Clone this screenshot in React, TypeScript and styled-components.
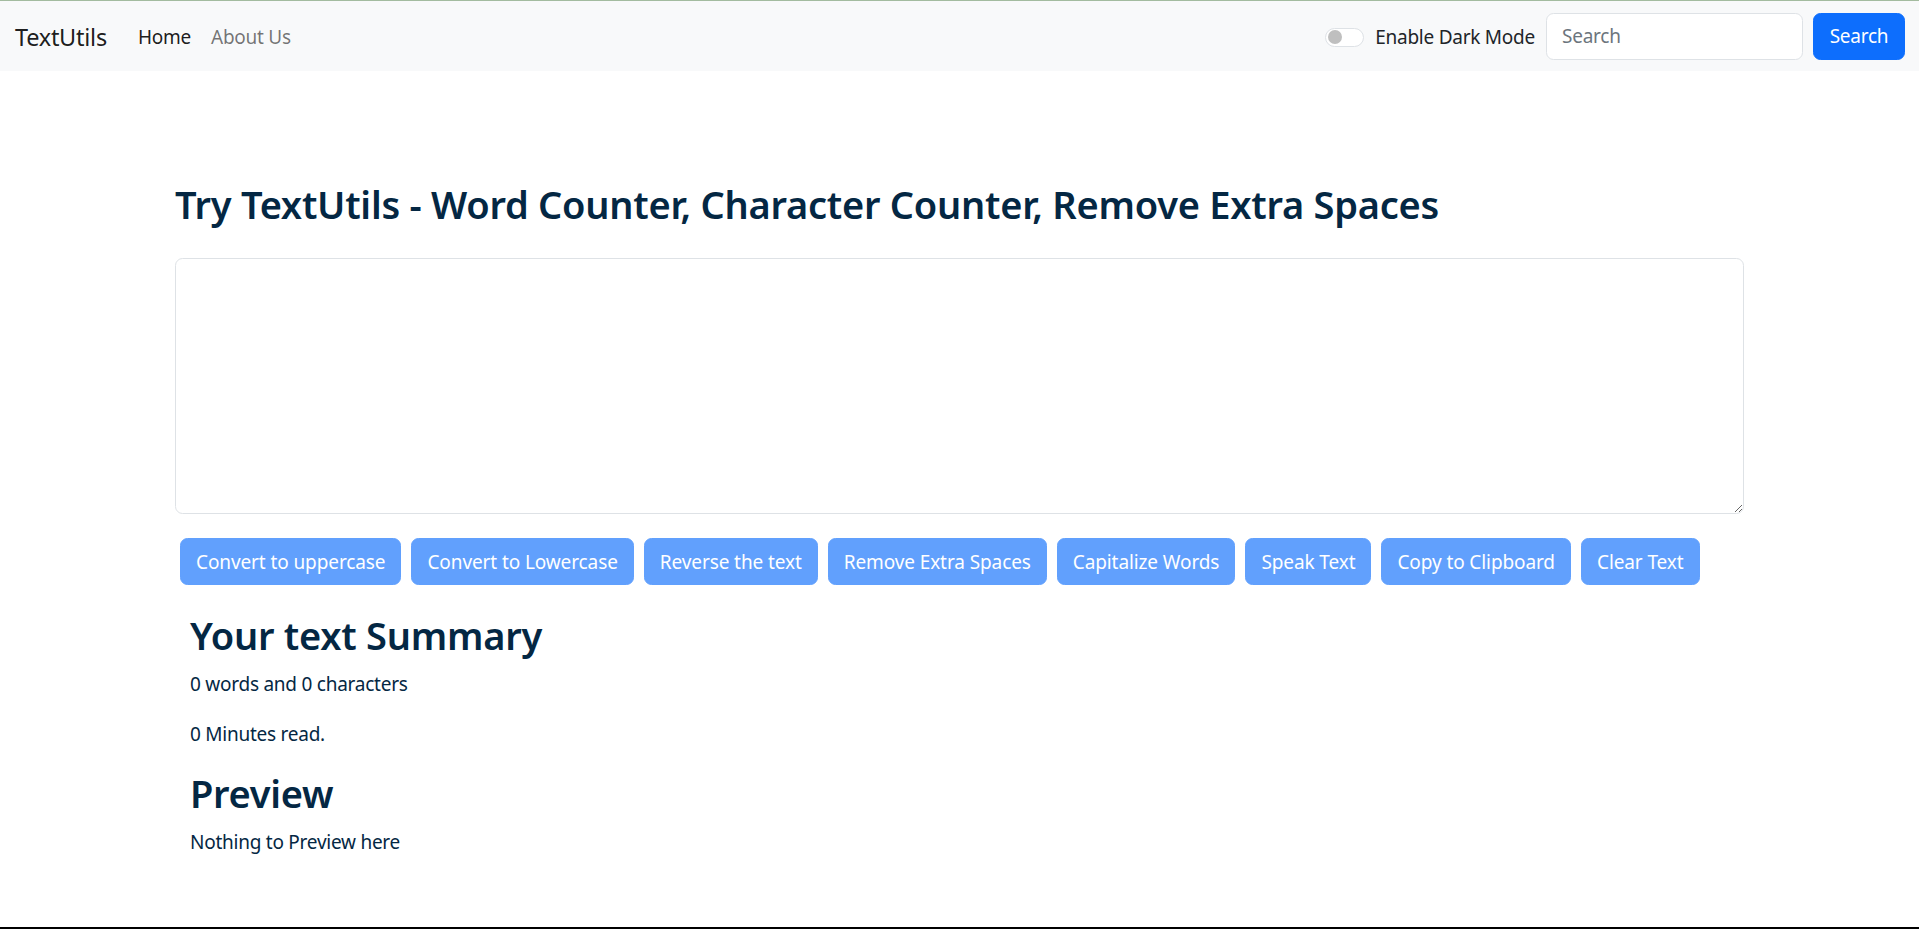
import React, { useState } from 'react';
import styled, { createGlobalStyle } from 'styled-components';

const GlobalStyle = createGlobalStyle`
  * {
    box-sizing: border-box;
  }
  body {
    margin: 0;
    font-family: "Noto Sans", "Open Sans", sans-serif;
    font-size: 19px;
    letter-spacing: -0.25px;
    line-height: 30px;
    background: #fff;
  }
`;

const buttons = [
  'Convert to uppercase',
  'Convert to Lowercase',
  'Reverse the text',
  'Remove Extra Spaces',
  'Capitalize Words',
  'Speak Text',
  'Copy to Clipboard',
  'Clear Text',
];

function Navbar() {
  return (
    <NavBar>
      <Brand href="#">TextUtils</Brand>
      <NavLinks>
        <NavLink $active href="#">Home</NavLink>
        <NavLink href="#">About Us</NavLink>
      </NavLinks>
      <NavRight>
        <SwitchWrap>
          <Switch>
            <Knob />
          </Switch>
          <SwitchLabel>Enable Dark Mode</SwitchLabel>
        </SwitchWrap>
        <SearchInput placeholder="Search" />
        <SearchButton>Search</SearchButton>
      </NavRight>
    </NavBar>
  );
}

export default function App() {
  const [text, setText] = useState('');

  const words = text.split(/\s+/).filter((w) => w.length > 0).length;

  return (
    <Page>
      <GlobalStyle />
      <Navbar />
      <Main>
        <Title>Try TextUtils - Word Counter, Character Counter, Remove Extra Spaces</Title>
        <TextBox rows={8} value={text} onChange={(e) => setText(e.target.value)} />
        <ButtonRow>
          {buttons.map((b) => (
            <ActionButton key={b} disabled={text.length === 0}>{b}</ActionButton>
          ))}
        </ButtonRow>
        <Summary>
          <SubTitle>Your text Summary</SubTitle>
          <Para>{words} words and {text.length} characters</Para>
          <Para>{0.008 * words} Minutes read.</Para>
          <SubTitle>Preview</SubTitle>
          <Para>{text.length > 0 ? text : 'Nothing to Preview here'}</Para>
        </Summary>
      </Main>
    </Page>
  );
}

const Page = styled.div`
  min-height: 100vh;
  display: flex;
  flex-direction: column;
  border-bottom: 2px solid #000;
`;

const NavBar = styled.nav`
  height: 71px;
  flex-shrink: 0;
  display: flex;
  align-items: center;
  padding: 2px 14px 0 15px;
  background-color: #f8f9fa;
  border-top: 1px solid #a3bb9f;
`;

const Brand = styled.a`
  font-size: 23.5px;
  color: rgba(0, 0, 0, 0.9);
  text-decoration: none;
  margin-right: 21px;
`;

const NavLinks = styled.div`
  display: flex;
  flex: 1;
`;

const NavLink = styled.a<{ $active?: boolean }>`
  padding: 0 10px;
  color: ${(p) => (p.$active ? 'rgba(0, 0, 0, 0.9)' : 'rgba(0, 0, 0, 0.55)')};
  text-decoration: none;
`;

const NavRight = styled.div`
  display: flex;
  align-items: center;
  margin-top: -2px;
`;

const SwitchWrap = styled.div`
  display: flex;
  align-items: center;
  margin-right: 11px;
  padding-top: 2px;
`;

const Switch = styled.span`
  width: 39px;
  height: 19px;
  border: 1px solid #dee2e6;
  border-radius: 10px;
  background: #fff;
  display: flex;
  align-items: center;
  padding-left: 2px;
  margin-right: 11px;
`;

const Knob = styled.span`
  width: 14px;
  height: 14px;
  border-radius: 50%;
  background: #bfbfbf;
`;

const SwitchLabel = styled.label`
  color: #212529;
`;

const SearchInput = styled.input`
  width: 257px;
  height: 47px;
  padding: 7px 15px;
  font-family: inherit;
  font-size: 19px;
  letter-spacing: -0.25px;
  color: #212529;
  border: 1px solid #dee2e6;
  border-radius: 7.5px;
  background: #fff;
  margin-right: 10px;
  outline: none;

  &::placeholder {
    color: #6c757d;
  }
`;

const SearchButton = styled.button`
  width: 92px;
  height: 47px;
  padding: 0;
  font-family: inherit;
  font-size: 19px;
  letter-spacing: -0.25px;
  color: #fff;
  background: #0d6efd;
  border: 1px solid #0d6efd;
  border-radius: 7.5px;
`;

const Main = styled.main`
  width: 1569px;
  margin: 0 auto;
  padding-top: 109px;
  color: #042743;
`;

const Title = styled.h1`
  font-size: 38px;
  font-weight: 600;
  line-height: 48px;
  margin: 0 0 30px;
`;

const TextBox = styled.textarea`
  display: block;
  width: 100%;
  height: 256px;
  padding: 7.5px 15px;
  font-family: inherit;
  font-size: 19px;
  color: #212529;
  border: 1px solid #dee2e6;
  border-radius: 7.5px;
  outline: none;
`;

const ButtonRow = styled.div`
  display: flex;
  flex-wrap: wrap;
  margin-top: 19px;
`;

const ActionButton = styled.button`
  height: 47px;
  margin: 5px;
  padding: 0 15px;
  font-family: inherit;
  font-size: 19px;
  letter-spacing: -0.1px;
  color: #fff;
  background: #0d6efd;
  border: 1px solid #0d6efd;
  border-radius: 7.5px;

  &:disabled {
    opacity: 0.65;
  }
`;

const Summary = styled.div`
  padding: 21px 15px 0;
`;

const SubTitle = styled.h2`
  font-size: 38px;
  font-weight: 600;
  line-height: 48px;
  margin: 0 0 10px;
`;

const Para = styled.p`
  margin: 0 0 20px;

  &:last-child {
    margin-bottom: 0;
  }
`;
